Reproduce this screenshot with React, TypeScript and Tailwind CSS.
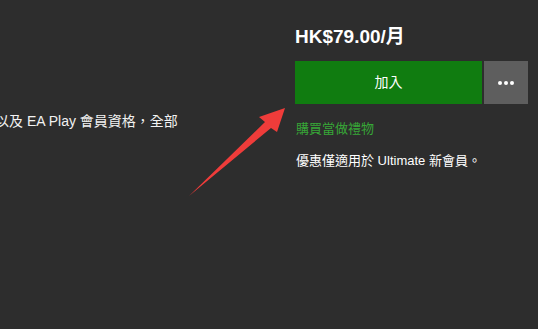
import React from "react";

export default function App() {
  return (
    <div
      className="relative flex w-[538px] h-[329px] overflow-hidden bg-[#2d2d2d] text-white"
      style={{ fontFamily: '"Liberation Sans", "Noto Sans CJK TC", sans-serif' }}
    >
      <div className="flex-1 overflow-hidden pt-[111px]">
        <p className="whitespace-nowrap text-[14px] leading-[20px] ml-[-5px] text-[#f2f2f2]">
          以及 EA Play 會員資格，全部
        </p>
      </div>
      <div className="w-[233px] mr-[10px] pt-[24px] flex flex-col">
        <div className="text-[19px] font-bold leading-[26px] text-white">HK$79.00/月</div>
        <div className="mt-[11px] flex gap-[2px] h-[43px]">
          <button className="flex-1 bg-[#107c10] text-white text-[14px] flex items-center justify-center">
            加入
          </button>
          <button className="w-[44px] bg-[#5e5e5e] flex items-center justify-center gap-[2px]">
            <span className="w-[4px] h-[4px] rounded-full bg-white" />
            <span className="w-[4px] h-[4px] rounded-full bg-white" />
            <span className="w-[4px] h-[4px] rounded-full bg-white" />
          </button>
        </div>
        <div className="mt-[15px] text-[13px] leading-[20px] text-[#37a637] ml-[1px]">購買當做禮物</div>
        <div className="mt-[12px] text-[13px] leading-[20px] text-white ml-[1px]">優惠僅適用於 Ultimate 新會員。</div>
      </div>
      <svg
        className="absolute left-0 top-0 pointer-events-none"
        width="538"
        height="329"
        viewBox="0 0 538 329"
      >
        <polygon
          points="285,108 259,117 265,122 189,196 271,128 277,132"
          fill="#ef3c3a"
        />
      </svg>
    </div>
  );
}
